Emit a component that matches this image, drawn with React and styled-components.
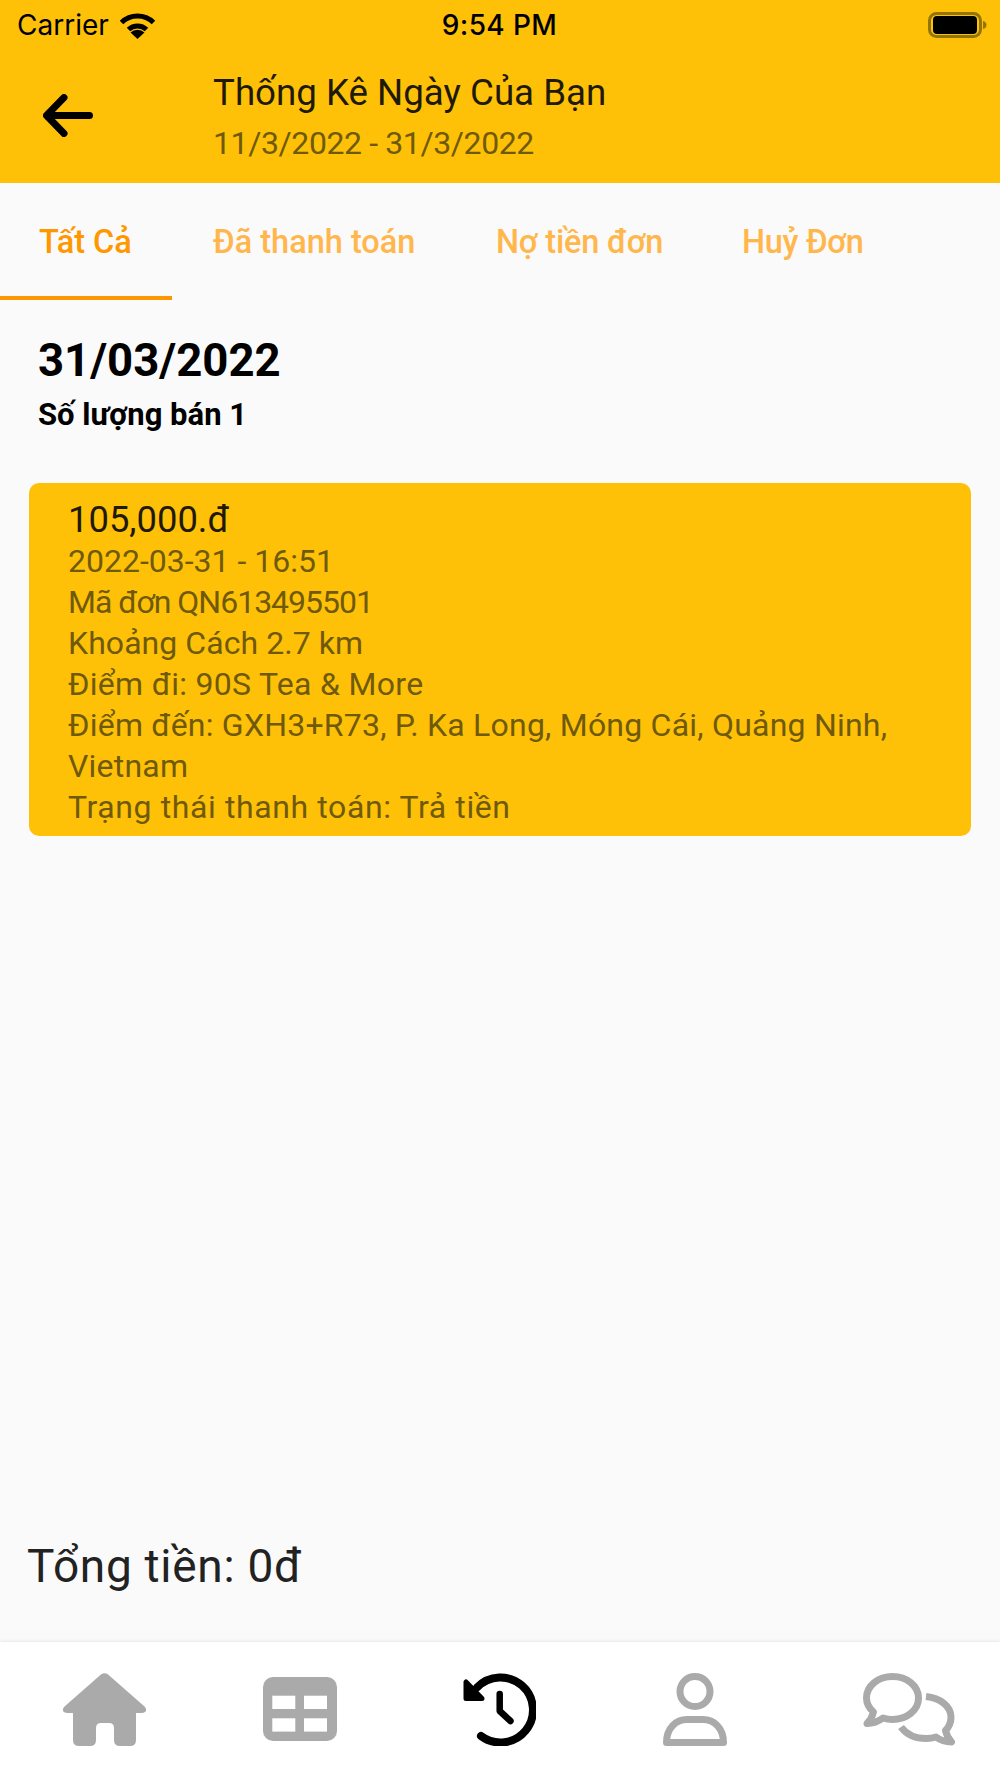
import React from "react";
import styled, { createGlobalStyle } from "styled-components";

const GlobalStyle = createGlobalStyle`
  html, body { margin: 0; padding: 0; background: #fafafa; }
  #root { width: 1000px; height: 1778px; }
  * { box-sizing: border-box; }
`;

const Screen = styled.div`
  width: 1000px;
  height: 1778px;
  display: flex;
  flex-direction: column;
  font-family: Roboto, "Liberation Sans", sans-serif;
  background: #fafafa;
`;

const Header = styled.header`
  height: 183px;
  background: #ffc107;
  display: flex;
  flex-direction: column;
`;

const StatusBar = styled.div`
  height: 50px;
  display: grid;
  grid-template-columns: 1fr auto 1fr;
  align-items: center;
  padding: 0 13px 0 12px;
  font-family: Inter, "Liberation Sans", sans-serif;
  font-size: 28px;
  color: #000;
`;

const Carrier = styled.div`
  display: flex;
  align-items: center;
  gap: 10px;
  margin-left: 5px;
`;

const Clock = styled.div`
  font-weight: 500;
  letter-spacing: 0.4px;
`;

const Battery = styled.div`
  justify-self: end;
  display: flex;
  align-items: center;
`;

const TitleRow = styled.div`
  display: flex;
  align-items: flex-start;
  padding-left: 43px;
`;

const Back = styled.div`
  width: 170px;
  padding-top: 44px;
  display: flex;
`;

const TitleBlock = styled.div`
  padding-top: 21px;
`;

const Title = styled.div`
  font-size: 36.7px;
  line-height: 44px;
  color: #1f1a05;
`;

const Subtitle = styled.div`
  font-size: 32px;
  line-height: 44px;
  margin-top: 6px;
  letter-spacing: -0.4px;
  color: #6f5a0c;
`;

const Tabs = styled.nav`
  height: 117px;
  display: flex;
`;

const Tab = styled.div`
  width: ${(p) => p.$w}px;
  padding-left: ${(p) => p.$pad}px;
  padding-top: 39px;
  font-size: 32.5px;
  line-height: 40px;
  font-weight: 500;
  letter-spacing: ${(p) => p.$track || 0}px;
  color: ${(p) => (p.$active ? "#ff9800" : "#ffb74d")};
  border-bottom: 4px solid ${(p) => (p.$active ? "#ff9800" : "transparent")};
`;

const Content = styled.main`
  flex: 1;
  display: flex;
  flex-direction: column;
`;

const DateHead = styled.div`
  padding: 34px 38px 0;
`;

const DateText = styled.div`
  font-size: 45.5px;
  line-height: 54px;
  font-weight: 700;
  color: #000;
`;

const Count = styled.div`
  font-size: 31px;
  line-height: 40px;
  font-weight: 700;
  color: #000;
  margin-top: 7px;
`;

const Card = styled.div`
  margin: 48px 29px 0;
  height: 353px;
  background: #ffc107;
  border-radius: 10px;
  padding: 15px 40px 0 39px;
`;

const Amount = styled.div`
  font-size: 36.4px;
  line-height: 43px;
  color: #1f1a05;
`;

const Line = styled.div`
  font-size: 32px;
  line-height: 41px;
  letter-spacing: ${(p) => p.$track}px;
  color: #6f5a0c;
`;

const Spacer = styled.div`
  flex: 1;
`;

const Total = styled.div`
  font-size: 46px;
  line-height: 54px;
  letter-spacing: 0.7px;
  padding: 0 27px 49px;
  color: #222;
`;

const TabBar = styled.footer`
  height: 136px;
  background: #fff;
  box-shadow: 0 -1px 3px rgba(0, 0, 0, 0.08);
  display: flex;
  align-items: flex-start;
  padding: 31px 0 0 63px;
`;

const BarIcon = styled.svg`
  display: block;
  flex: none;
  margin-left: ${(p) => p.$gap || 0}px;
  margin-top: ${(p) => p.$top || 0}px;
`;

const WifiIcon = () => (
  <svg width="37" height="27" viewBox="0 0 37 27">
    <path d="M2.500 10.500A23 23 0 0 1 34.500 10.500" fill="none" stroke="#000" strokeWidth="5" />
    <path d="M9.500 17.500A13 13 0 0 1 27.500 17.500" fill="none" stroke="#000" strokeWidth="5" />
    <path d="M18.500 27L11.500 20.500A10 10 0 0 1 25.500 20.500Z" fill="#000" />
  </svg>
);

const BatteryIcon = () => (
  <svg width="59" height="26" viewBox="0 0 59 26">
    <rect x="1.500" y="1.500" width="51" height="23" rx="7" fill="none" stroke="#927509" strokeWidth="3" />
    <rect x="5" y="4" width="44" height="18" rx="4" fill="#000" />
    <path d="M55 9c2.200.6 3.500 2 3.500 4s-1.300 3.400-3.500 4z" fill="#927509" />
  </svg>
);

const BackArrow = () => (
  <svg width="50" height="43" viewBox="0 0 50 43">
    <path
      d="M46.500 21.500H4M21 3.500L3.500 21.500L21 39.500"
      fill="none"
      stroke="#000"
      strokeWidth="7"
      strokeLinecap="round"
      strokeLinejoin="round"
    />
  </svg>
);

const HomeIcon = () => (
  <BarIcon width="83" height="73" viewBox="0 0 83 73">
    <path
      d="M38.500 1Q41.500-.5 44.500 1L81.500 33.500Q84.500 37 82 39Q81 40 78 40L73 40L73 67Q73 73 67 73L57 73Q51 73 51 67L51 55Q51 50 46 50L38 50Q33 50 33 55L33 67Q33 73 27 73L16 73Q10 73 10 67L10 40L5 40Q2 40 1 39Q-1.500 37 1.500 33.500Z"
      fill="#aaa"
    />
  </BarIcon>
);

const TableIcon = () => (
  <BarIcon $gap={117} $top={4} width="74" height="64" viewBox="0 0 74 64">
    <rect width="74" height="64" rx="10" fill="#aaa" />
    <rect x="9.300" y="18.700" width="23" height="13.300" fill="#fff" />
    <rect x="41" y="18.700" width="23" height="13.300" fill="#fff" />
    <rect x="9.300" y="41.300" width="23" height="13.300" fill="#fff" />
    <rect x="41" y="41.300" width="23" height="13.300" fill="#fff" />
  </BarIcon>
);

const HistoryIcon = () => (
  <BarIcon $gap={126} width="73" height="73" viewBox="0 0 73 73" fill="none" stroke="#000" strokeLinecap="round" strokeLinejoin="round">
    <path d="M14 14.500A32.500 32.500 0 1 1 18 63" strokeWidth="8" />
    <path d="M3 9L3 25.500L19 25.500Z" fill="#000" strokeWidth="5" />
    <path d="M36.700 21V38L47.500 48" strokeWidth="6.500" />
  </BarIcon>
);

const UserIcon = () => (
  <BarIcon $gap={127} width="64" height="73" viewBox="0 0 64 73" fill="none" stroke="#aaa" strokeWidth="7" strokeLinejoin="round">
    <circle cx="32" cy="18.500" r="15" />
    <path d="M3.500 69.500C3.500 55 13 46.500 24 46.500H40C51 46.500 60.500 55 60.500 69.500Z" />
  </BarIcon>
);

const CommentsIcon = () => (
  <BarIcon $gap={136} width="92" height="73" viewBox="0 0 92 73" fill="none" stroke="#aaa" strokeWidth="7" strokeLinejoin="round">
    <path d="M29.500 3.500C44 3.500 55.500 13 55.500 25C55.500 37 44 46.500 29.500 46.500C26 46.500 23 46 20 45C16 48 10 50.500 4 50.500C7.500 47 9.500 43 10.500 39C6 35 3.500 30.500 3.500 25C3.500 13 15 3.500 29.500 3.500Z" />
    <path d="M63 23.500C77 25 88 33 88 44C88 49 86 54 82.500 57.500C83.500 62 86 66 88.500 69C82.500 69 77 67 73 64C70 65 67 65.500 63.500 65.500C52 65.500 43 61 38 54" />
  </BarIcon>
);

const lines = [
  { text: "2022-03-31 - 16:51", track: 0 },
  { text: "Mã đơn QN613495501", track: -1 },
  { text: "Khoảng Cách 2.7 km", track: 0.06 },
  { text: "Điểm đi: 90S Tea & More", track: 0.3 },
  { text: "Điểm đến: GXH3+R73, P. Ka Long, Móng Cái, Quảng Ninh, Vietnam", track: 0.22 },
  { text: "Trạng thái thanh toán: Trả tiền", track: 0.6 },
];

export default function App() {
  return (
    <Screen>
      <GlobalStyle />
      <Header>
        <StatusBar>
          <Carrier>
            Carrier <WifiIcon />
          </Carrier>
          <Clock>9:54 PM</Clock>
          <Battery>
            <BatteryIcon />
          </Battery>
        </StatusBar>
        <TitleRow>
          <Back>
            <BackArrow />
          </Back>
          <TitleBlock>
            <Title>Thống Kê Ngày Của Bạn</Title>
            <Subtitle>11/3/2022 - 31/3/2022</Subtitle>
          </TitleBlock>
        </TitleRow>
      </Header>
      <Tabs>
        <Tab $active $w={172} $pad={39}>Tất Cả</Tab>
        <Tab $w={284} $pad={41}>Đã thanh toán</Tab>
        <Tab $w={246} $pad={40} $track={-0.2}>Nợ tiền đơn</Tab>
        <Tab $w={240} $pad={40} $track={-0.3}>Huỷ Đơn</Tab>
      </Tabs>
      <Content>
        <DateHead>
          <DateText>31/03/2022</DateText>
          <Count>Số lượng bán 1</Count>
        </DateHead>
        <Card>
          <Amount>105,000.đ</Amount>
          {lines.map((l) => (
            <Line key={l.text} $track={l.track}>{l.text}</Line>
          ))}
        </Card>
        <Spacer />
        <Total>Tổng tiền: 0đ</Total>
      </Content>
      <TabBar>
        <HomeIcon />
        <TableIcon />
        <HistoryIcon />
        <UserIcon />
        <CommentsIcon />
      </TabBar>
    </Screen>
  );
}
